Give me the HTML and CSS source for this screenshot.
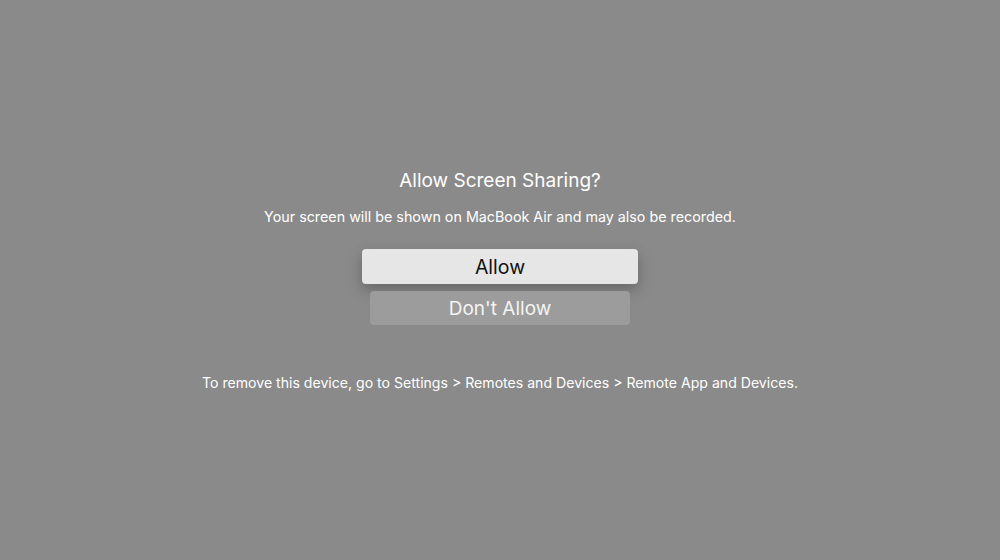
FILE: index.html
```html
<!DOCTYPE html>
<html lang="en">
<head>
    <meta charset="UTF-8">
    <meta name="viewport" content="width=device-width, initial-scale=1.0">
    <title>Allow Screen Sharing?</title>
    <link rel="stylesheet" href="styles.css">
</head>
<body>
    <div class="alert">
        <h1 class="alert-title">Allow Screen Sharing?</h1>
        <p class="alert-message">Your screen will be shown on MacBook Air and may also be recorded.</p>

        <div class="alert-buttons">
            <button class="btn btn-focused">Allow</button>
            <button class="btn">Don't Allow</button>
        </div>

        <p class="alert-footer">To remove this device, go to Settings &gt; Remotes and Devices &gt; Remote App and Devices.</p>
    </div>
</body>
</html>
```

FILE: styles.css
```css
body {
    margin: 0;
    padding: 0;
    background: #8a8a8a;
    font-family: 'Inter', 'Roboto', sans-serif;
    color: #ffffff;
    min-height: 100vh;
}

.alert {
    display: flex;
    flex-direction: column;
    align-items: center;
    padding-top: 169px;
}

.alert-title {
    margin: 0;
    font-size: 19px;
    font-weight: 400;
    line-height: 24px;
}

.alert-message {
    margin: 14px 0 0;
    font-size: 14.3px;
    line-height: 20px;
}

.alert-buttons {
    display: flex;
    flex-direction: column;
    align-items: center;
    gap: 7px;
    margin-top: 22px;
}

.btn {
    width: 260px;
    height: 34px;
    border: none;
    border-radius: 4px;
    background: #9c9c9c;
    color: #f4f4f4;
    font-family: inherit;
    font-size: 19px;
    padding: 0;
}

.btn-focused {
    width: 276px;
    height: 35px;
    background: #e6e6e6;
    color: #111111;
    font-size: 19.5px;
    box-shadow: 0 6px 14px rgba(0, 0, 0, 0.25);
}

.alert-footer {
    margin: 48px 0 0;
    font-size: 14.1px;
    line-height: 20px;
}
```
